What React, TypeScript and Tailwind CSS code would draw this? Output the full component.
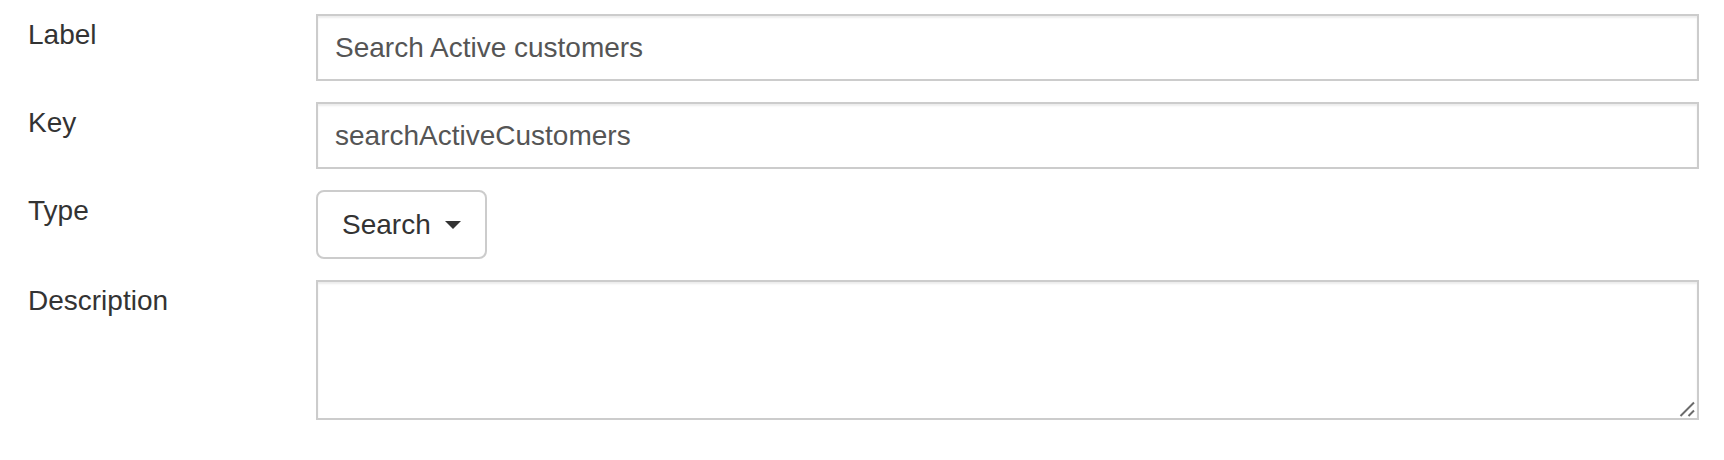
import React from 'react';

const labelClass = "text-[28px] leading-[42px] text-[#333]";
const inputClass =
  "w-full h-[67px] border-2 border-[#ccc] bg-white pl-[17px] pr-4 text-[28px] text-[#555] outline-none shadow-[inset_0_2px_2px_rgba(0,0,0,0.075)]";

const App: React.FC = () => {
  return (
    <div className="min-h-screen bg-white font-['Liberation_Sans',Arial,sans-serif]">
      <form className="grid grid-cols-[288px_1fr] gap-y-[21px] pl-[28px] pr-[25px] pt-[14px]">
        <label htmlFor="label" className={labelClass}>Label</label>
        <input id="label" type="text" defaultValue="Search Active customers" className={inputClass} />

        <label htmlFor="key" className={labelClass}>Key</label>
        <input id="key" type="text" defaultValue="searchActiveCustomers" className={inputClass} />

        <label className={labelClass}>Type</label>
        <div>
          <button
            type="button"
            className="flex h-[69px] items-center rounded-[8px] border-2 border-[#ccc] bg-white pl-[24px] pr-[24px] text-[28px] text-[#333]"
          >
            Search
            <span className="ml-[14px] h-0 w-0 border-x-[8px] border-t-[8px] border-x-transparent border-t-[#333]" />
          </button>
        </div>

        <label htmlFor="description" className={labelClass}>Description</label>
        <div className="relative">
          <textarea
            id="description"
            className="block h-[140px] w-full resize-none border-2 border-[#ccc] bg-white px-4 py-3 text-[28px] text-[#555] outline-none shadow-[inset_0_2px_2px_rgba(0,0,0,0.075)]"
          />
          {/* resize grip, drawn at the 2x size of the reference */}
          <svg className="pointer-events-none absolute bottom-[2px] right-[2px] h-[20px] w-[20px]" viewBox="0 0 20 20">
            <line x1="3.5" y1="18" x2="17" y2="4.5" stroke="#6b6b6b" strokeWidth="2" />
            <line x1="11.5" y1="18" x2="17" y2="12.5" stroke="#6b6b6b" strokeWidth="2" />
          </svg>
        </div>
      </form>
    </div>
  );
};

export default App;
